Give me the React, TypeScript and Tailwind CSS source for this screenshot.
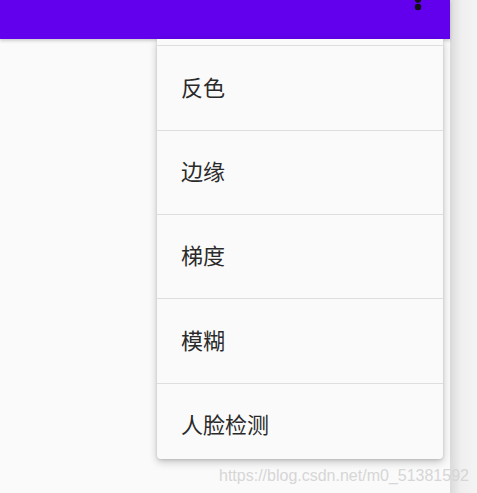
const items = [
  { label: "反色", h: "h-[85px]" },
  { label: "边缘", h: "h-[84px]" },
  { label: "梯度", h: "h-[84px]" },
  { label: "模糊", h: "h-[85px]" },
  { label: "人脸检测", h: "h-[84px]" },
];

export default function App() {
  return (
    <div className="relative flex h-[493px] w-[477px] overflow-hidden bg-[#f4f4f4] font-['Roboto','Noto_Sans_CJK_SC',sans-serif]">
      <div className="flex w-[450px] flex-col">
        <div className="relative h-[39px] shrink-0 bg-[#6200ee] shadow-[0_2px_3px_rgba(0,0,0,0.18)] z-10">
          {/* overflow menu dots, scrolled partly out of view */}
          <svg className="absolute left-[414px] top-[-12px]" width="8" height="24" viewBox="0 0 8 24">
            <circle cx="4" cy="4" r="3.2" fill="#111" />
            <circle cx="4" cy="11.5" r="3.2" fill="#111" />
            <circle cx="4" cy="19" r="3.2" fill="#111" />
          </svg>
        </div>
        <div className="flex-1 bg-[#fafafa]" />
      </div>
      <div className="w-[27px] bg-gradient-to-r from-[#dadada] via-[#efefef] via-40% to-[#f4f4f4]" />

      <div className="absolute left-[157px] top-[39px] z-20 flex h-[420px] w-[286px] flex-col overflow-hidden rounded-b-[4px] bg-[#fafafa] shadow-[0_3px_8px_rgba(0,0,0,0.22),0_1px_3px_rgba(0,0,0,0.12)]">
        <div className="h-[6px] shrink-0" />
        {items.map((item) => (
          <div
            key={item.label}
            className={`${item.h} flex shrink-0 items-center border-t border-[#dedede] pl-6 text-[22px] text-[#2a2a2a]`}
          >
            {item.label}
          </div>
        ))}
      </div>

      <div className="absolute left-[219px] top-[464px] z-30 whitespace-nowrap font-['Liberation_Sans',Arial,sans-serif] text-[16px] text-[#d6d6d6]">
        https://blog.csdn.net/m0_51381592
      </div>
    </div>
  );
}
